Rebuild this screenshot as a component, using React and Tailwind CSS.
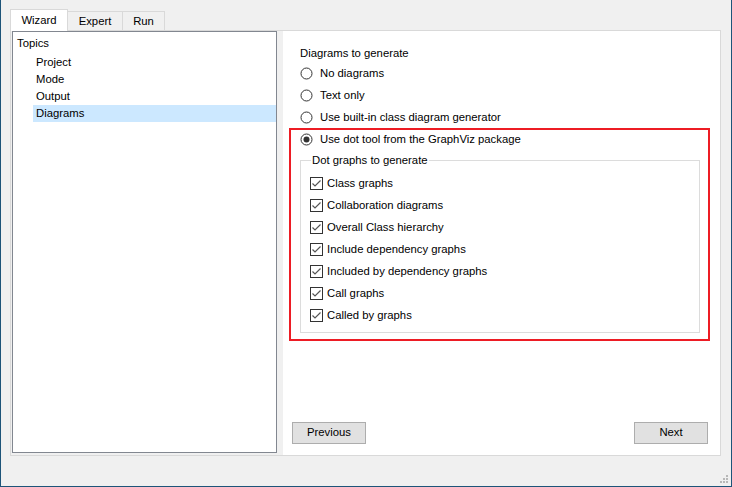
import React from "react";

const FONT = { fontFamily: '"Liberation Sans", Arial, sans-serif' };

const Radio = ({ checked, label }) => (
  <div className="flex items-center h-[22px] gap-[7px]">
    <svg width="13" height="13" viewBox="0 0 13 13" className="shrink-0">
      <circle cx="6.5" cy="6.5" r="5.5" fill="#fff" stroke="#333" strokeWidth="1" />
      {checked && <circle cx="6.5" cy="6.5" r="3" fill="#333" />}
    </svg>
    <span>{label}</span>
  </div>
);

const Check = ({ label }) => (
  <div className="flex items-center h-[22px] gap-[4px]">
    <svg width="13" height="13" viewBox="0 0 13 13" className="shrink-0">
      <rect x="0.5" y="0.5" width="12" height="12" fill="#fff" stroke="#333" strokeWidth="1" />
      <path d="M2.5 6.5 L5 9 L10.5 3.5" fill="none" stroke="#555" strokeWidth="1.2" />
    </svg>
    <span>{label}</span>
  </div>
);

const graphs = [
  "Class graphs",
  "Collaboration diagrams",
  "Overall Class hierarchy",
  "Include dependency graphs",
  "Included by dependency graphs",
  "Call graphs",
  "Called by graphs",
];

export default function App() {
  return (
    <div
      style={FONT}
      className="relative w-[732px] h-[487px] bg-[#f0f0f0] border-x border-b border-[#1d5479] pl-[9px] pt-[9px] text-[11.3px] text-black flex flex-col"
    >
      {/* Tabs */}
      <div className="flex items-end h-[21px]">
        <div className="relative z-10 -mb-px h-[22px] w-[58px] bg-white border border-b-0 border-[#d9d9d9] flex items-center justify-center">
          Wizard
        </div>
        <div className="h-[19px] w-[55px] border-t border-r border-[#d9d9d9] flex items-center justify-center">
          Expert
        </div>
        <div className="h-[19px] w-[42px] border-t border-r border-[#d9d9d9] flex items-center justify-center">
          Run
        </div>
      </div>

      {/* Pane */}
      <div className="w-[711px] h-[426px] border border-[#d9d9d9] bg-[#f0f0f0] pl-px flex">
        {/* Tree */}
        <div className="w-[265px] h-[422px] bg-white border border-[#828790] pt-[3px]">
          <div className="h-[17px] flex items-center pl-[4px]">Topics</div>
          <div className="mt-[2px]">
            {["Project", "Mode", "Output", "Diagrams"].map((t) => (
              <div
                key={t}
                className={
                  "ml-[20px] h-[17px] flex items-center pl-[3px] " +
                  (t === "Diagrams" ? "bg-[#cce8ff]" : "")
                }
              >
                {t}
              </div>
            ))}
          </div>
        </div>

        {/* Right panel */}
        <div className="ml-[6px] flex-1 bg-white flex flex-col pt-[13px] pl-[6px] pr-[10px] pb-[11px]">
          <div className="pl-[11px]">
            <div className="h-[18px] flex items-center">Diagrams to generate</div>
            <Radio label="No diagrams" />
            <Radio label="Text only" />
            <Radio label="Use built-in class diagram generator" />
          </div>

          <div className="border-2 border-[#ed1c24] pl-[9px] pr-[8px] pb-[6px]">
            <div className="h-[18px]">
              <div className="-mt-[2px]">
                <Radio checked label="Use dot tool from the GraphViz package" />
              </div>
            </div>
            <fieldset className="border border-[#dcdcdc] pl-[9px] pb-[6px] mt-[7px]">
              <legend className="ml-[1px] px-[1px] leading-[14px]">Dot graphs to generate</legend>
              <div className="pt-[5px]">
                {graphs.map((g) => (
                  <Check key={g} label={g} />
                ))}
              </div>
            </fieldset>
          </div>

          <div className="mt-auto flex justify-between pl-[3px] pr-[2px]">
            <button className="w-[74px] h-[22px] bg-[#e1e1e1] border border-[#adadad] leading-none">
              Previous
            </button>
            <button className="w-[74px] h-[22px] bg-[#e1e1e1] border border-[#adadad] leading-none">
              Next
            </button>
          </div>
        </div>
      </div>

      {/* Resize grip */}
      <svg width="10" height="10" viewBox="0 0 10 10" className="absolute right-[2px] bottom-[2px]">
        <rect x="7" y="1" width="2" height="2" fill="#b8b8b8" />
        <rect x="4" y="4" width="2" height="2" fill="#b8b8b8" />
        <rect x="7" y="4" width="2" height="2" fill="#b8b8b8" />
        <rect x="1" y="7" width="2" height="2" fill="#b8b8b8" />
        <rect x="4" y="7" width="2" height="2" fill="#b8b8b8" />
        <rect x="7" y="7" width="2" height="2" fill="#b8b8b8" />
      </svg>
    </div>
  );
}
